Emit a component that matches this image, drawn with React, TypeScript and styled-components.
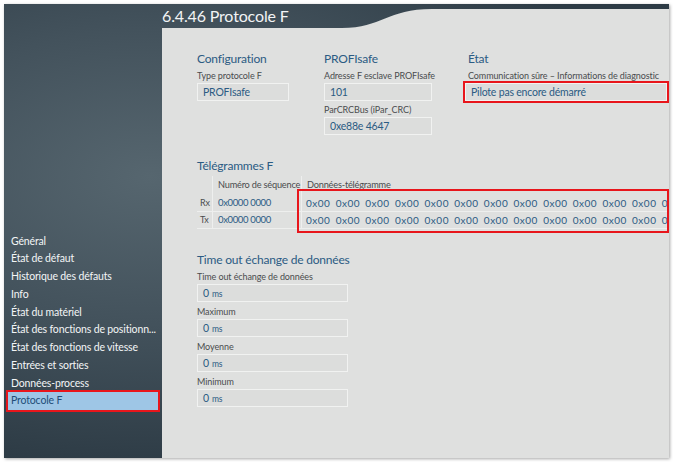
import React from "react";
import styled, { createGlobalStyle } from "styled-components";

const Global = createGlobalStyle`
  html, body { margin: 0; padding: 0; background: #ffffff; }
  body { font-family: Lato, "Open Sans", sans-serif; }
  * { box-sizing: border-box; }
`;

const FONT = `Lato, "Open Sans", sans-serif`;
const PANEL = "#dfe0df";
const BLUE = "#2b5b83";
const RED = "#e8161c";

const Page = styled.div`
  width: 673px;
  height: 462px;
  padding: 4px 0 0 4px;
`;

const Frame = styled.div`
  width: 665px;
  height: 454px;
  display: grid;
  grid-template-columns: 158px 1fr;
  grid-template-rows: 24px 1fr;
  background: radial-gradient(ellipse 75% 65% at 22% 38%, #56666f 0%, #43525c 50%, #2d3b45 100%);
  box-shadow: 1px 1px 3px rgba(0, 0, 0, 0.35);
  font-family: ${FONT};
`;

const Sidebar = styled.nav`
  grid-row: 1 / 3;
  display: flex;
  flex-direction: column;
  justify-content: flex-end;
  padding: 0 2px 48px 4px;
`;

const MenuItem = styled.div<{ $active?: boolean }>`
  height: 17.75px;
  line-height: 17.75px;
  padding-left: 3px;
  margin-right: 2px;
  font-size: 10.5px;
  letter-spacing: -0.15px;
  color: ${(p) => (p.$active ? "#1f4d78" : "#f3f5f6")};
  background: ${(p) => (p.$active ? "#9ec6e6" : "transparent")};
  outline: ${(p) => (p.$active ? `2px solid ${RED}` : "none")};
  white-space: nowrap;
  overflow: hidden;
`;

const Header = styled.header`
  grid-column: 2;
  display: flex;
  align-items: stretch;
`;

const Title = styled.h1`
  margin: 0;
  width: 180px;
  font-weight: 400;
  font-size: 16px;
  letter-spacing: -0.15px;
  line-height: 24px;
  color: #f2f4f5;
  white-space: nowrap;
`;

const HeaderRest = styled.div`
  flex: 1;
  margin-top: 5px;
  background: ${PANEL};
`;

const Content = styled.main`
  grid-column: 2;
  background: ${PANEL};
  padding: 23px 0 0 35px;
  display: flex;
  flex-direction: column;
  overflow: hidden;
`;

const TopRow = styled.div`
  display: grid;
  grid-template-columns: 127px 141px 202px;
`;

const Column = styled.section<{ $indent?: number }>`
  display: flex;
  flex-direction: column;
  & > h2, & > div:not([data-field]) {
    padding-left: ${(p) => p.$indent ?? 0}px;
  }
`;

const Heading = styled.h2<{ $mt?: number }>`
  margin: ${(p) => p.$mt ?? 0}px 0 0 0;
  font-weight: 400;
  font-size: 12px;
  letter-spacing: -0.2px;
  line-height: 16px;
  height: 16px;
  color: ${BLUE};
  white-space: nowrap;
`;

const Label = styled.div<{ $mt?: number }>`
  margin-top: ${(p) => p.$mt ?? 2}px;
  font-size: 9px;
  letter-spacing: -0.1px;
  line-height: 13px;
  height: 13px;
  color: #4a4c4e;
  white-space: nowrap;
`;

const Field = styled.div.attrs({ "data-field": "" })<{ $w?: number; $highlight?: boolean }>`
  margin-top: 1px;
  width: ${(p) => (p.$w ? `${p.$w}px` : "100%")};
  height: 18px;
  border: 1px solid #f1f2f1;
  background: #dcdddc;
  padding-left: 5px;
  font-size: 10.5px;
  letter-spacing: -0.2px;
  line-height: 16px;
  color: ${BLUE};
  white-space: nowrap;
  outline: ${(p) => (p.$highlight ? `2px solid ${RED}` : "none")};
`;

const Unit = styled.span`
  font-size: 8.5px;
  margin-left: 3px;
`;

const TableWrap = styled.div`
  position: relative;
  margin-top: 2px;
  width: 470px;
`;

const Table = styled.div`
  display: grid;
  grid-template-columns: 16px 89px 1fr;
  grid-template-rows: 19px 17px 17px;
  overflow: hidden;
`;

const Cell = styled.div<{ $kind?: "head" | "side" | "seq" | "data"; $line?: boolean; $sep?: boolean }>`
  border-right: ${(p) => (p.$sep ? "1px solid #eeefee" : "none")};
  border-bottom: ${(p) => (p.$line ? "1px solid #eeefee" : "none")};
  padding-left: ${(p) => (p.$kind === "side" ? 3 : p.$kind === "data" ? 3 : 5)}px;
  font-size: ${(p) => (p.$kind === "side" ? 9 : p.$kind === "head" ? 9.2 : 9.5)}px;
  letter-spacing: ${(p) => (p.$kind === "seq" ? -0.35 : p.$kind === "head" ? -0.2 : -0.15)}px;
  line-height: ${(p) => (p.$kind === "head" ? 17 : 16)}px;
  color: ${(p) => (p.$kind === "head" || p.$kind === "side" ? "#4a4c4e" : BLUE)};
  white-space: nowrap;
  overflow: hidden;
  display: flex;
`;

const Byte = styled.span`
  flex: 0 0 29.65px;
  padding-left: 1px;
  font-size: 10px;
  letter-spacing: 0.5px;
`;

const Highlight = styled.div`
  position: absolute;
  left: 100px;
  top: 13px;
  width: 372px;
  height: 44px;
  border: 2px solid ${RED};
  pointer-events: none;
`;

const bytes = Array.from({ length: 13 }, () => "0x00");

const menu = [
  "Général",
  "État de défaut",
  "Historique des défauts",
  "Info",
  "État du matériel",
  "État des fonctions de positionn...",
  "État des fonctions de vitesse",
  "Entrées et sorties",
  "Données-process",
  "Protocole F",
];

function DataRow() {
  return (
    <Cell $kind="data" $line>
      {bytes.map((b, i) => (
        <Byte key={i}>{b}</Byte>
      ))}
    </Cell>
  );
}

export default function App() {
  return (
    <Page>
      <Global />
      <Frame>
        <Sidebar>
          {menu.map((m) => (
            <MenuItem key={m} $active={m === "Protocole F"}>
              {m}
            </MenuItem>
          ))}
        </Sidebar>
        <Header>
          <Title>6.4.46 Protocole F</Title>
          <svg width="90" height="24" viewBox="0 0 90 24" style={{ display: "block", flex: "0 0 90px" }}>
            <path d="M0 24 C 40 24, 45 5, 90 5 L 90 24 Z" fill={PANEL} />
          </svg>
          <HeaderRest />
        </Header>
        <Content>
          <TopRow>
            <Column>
              <Heading>Configuration</Heading>
              <Label>Type protocole F</Label>
              <Field $w={92}>PROFIsafe</Field>
            </Column>
            <Column>
              <Heading>PROFIsafe</Heading>
              <Label>Adresse F esclave PROFIsafe</Label>
              <Field $w={108}>101</Field>
              <Label $mt={2}>ParCRCBus (iPar_CRC)</Label>
              <Field $w={108}>0xe88e 4647</Field>
            </Column>
            <Column $indent={3}>
              <Heading>État</Heading>
              <Label>Communication sûre – Informations de diagnostic</Label>
              <Field $w={202} $highlight>Pilote pas encore démarré</Field>
            </Column>
          </TopRow>

          <Heading $mt={23}>Télégrammes F</Heading>
          <TableWrap>
            <Table>
              <Cell $sep />
              <Cell $kind="head" $sep>Numéro de séquence</Cell>
              <Cell $kind="head">Données-télégramme</Cell>

              <Cell $kind="side" $sep $line>Rx</Cell>
              <Cell $kind="seq" $sep $line>0x0000 0000</Cell>
              <DataRow />

              <Cell $kind="side" $sep $line>Tx</Cell>
              <Cell $kind="seq" $sep $line>0x0000 0000</Cell>
              <DataRow />
            </Table>
            <Highlight />
          </TableWrap>

          <Heading $mt={23}>Time out échange de données</Heading>
          <Label>Time out échange de données</Label>
          <Field $w={151}>0<Unit>ms</Unit></Field>
          <Label $mt={3}>Maximum</Label>
          <Field $w={151}>0<Unit>ms</Unit></Field>
          <Label $mt={3}>Moyenne</Label>
          <Field $w={151}>0<Unit>ms</Unit></Field>
          <Label $mt={3}>Minimum</Label>
          <Field $w={151}>0<Unit>ms</Unit></Field>
        </Content>
      </Frame>
    </Page>
  );
}
